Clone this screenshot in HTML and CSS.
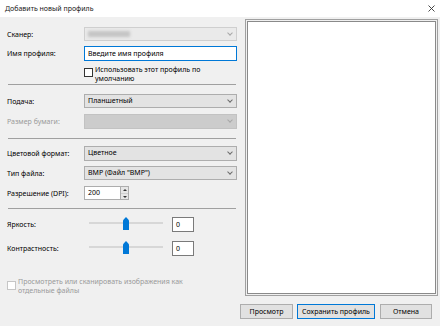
FILE: index.html
```html
<!DOCTYPE html>
<html lang="ru">
<head>
  <meta charset="UTF-8" />
  <title>Добавить новый профиль</title>
  <link rel="stylesheet" href="styles.css">
</head>
<body>
  <div class="dialog">
    <div class="titlebar">
      <span class="title">Добавить новый профиль</span>
      <svg class="close" viewBox="0 0 7 7" width="7" height="7">
        <path d="M0.5,0.5L6.5,6.5M6.5,0.5L0.5,6.5" stroke="#333" stroke-width="0.9" fill="none"/>
      </svg>
    </div>

    <div class="content">
      <div class="form">
        <div class="row r-scanner">
          <span class="label">Сканер:</span>
          <div class="combo combo-light">
            <span class="blurred"></span>
            <span class="chev"></span>
          </div>
        </div>
        <div class="row r-name">
          <span class="label">Имя профиля:</span>
          <div class="textbox focused">Введите имя профиля</div>
        </div>
        <div class="checkrow r-default">
          <span class="check"></span>
          <span class="checktext">Использовать этот профиль по<br>умолчанию</span>
        </div>
        <div class="sep s1"></div>

        <div class="row r-feed">
          <span class="label">Подача:</span>
          <div class="combo">Планшетный<span class="chev"></span></div>
        </div>
        <div class="row r-paper">
          <span class="label disabled">Размер бумаги:</span>
          <div class="combo combo-disabled"><span class="chev"></span></div>
        </div>
        <div class="sep s2"></div>

        <div class="row r-color">
          <span class="label">Цветовой формат:</span>
          <div class="combo">Цветное<span class="chev"></span></div>
        </div>
        <div class="row r-type">
          <span class="label">Тип файла:</span>
          <div class="combo">BMP (Файл "BMP")<span class="chev"></span></div>
        </div>
        <div class="row r-dpi">
          <span class="label">Разрешение (DPI):</span>
          <div class="spinner">
            <div class="spinbox">200</div>
            <div class="spinbtns">
              <span class="spin up"></span>
              <span class="spin down"></span>
            </div>
          </div>
        </div>
        <div class="sep s3"></div>

        <div class="row r-bright">
          <span class="label">Яркость:</span>
          <div class="slider"><span class="track"></span><span class="thumb"></span></div>
          <div class="numbox">0</div>
        </div>
        <div class="row r-contrast">
          <span class="label">Контрастность:</span>
          <div class="slider"><span class="track"></span><span class="thumb"></span></div>
          <div class="numbox">0</div>
        </div>

        <div class="checkrow r-separate">
          <span class="check check-disabled"></span>
          <span class="checktext disabled">Просмотреть или сканировать изображения как<br>отдельные файлы</span>
        </div>
      </div>

      <div class="preview">
        <div class="preview-inner"></div>
      </div>
    </div>

    <div class="footer">
      <button class="btn b-preview">Просмотр</button>
      <button class="btn b-save default">Сохранить профиль</button>
      <button class="btn b-cancel">Отмена</button>
    </div>
  </div>
</body>
</html>
```

FILE: styles.css
```css
body {
  margin: 0;
  background: #f0f0f0;
  font-family: 'Noto Sans', 'Open Sans', sans-serif;
  font-size: 7px;
  color: #000;
}
.dialog {
  width: 440px;
  height: 326px;
  display: flex;
  flex-direction: column;
  overflow: hidden;
}
.titlebar {
  height: 17px;
  background: #fff;
  display: flex;
  align-items: center;
  justify-content: space-between;
  padding: 0 5px 0 5px;
  flex-shrink: 0;
}
.title {
  font-size: 7px;
  color: #1a1a1a;
}
.content {
  display: flex;
  height: 281px;
}
.form {
  width: 237px;
  padding: 10px 0 0 7px;
  box-sizing: border-box;
  display: flex;
  flex-direction: column;
}
.row {
  display: flex;
  align-items: center;
  height: 14px;
}
.label {
  width: 77px;
  flex-shrink: 0;
  white-space: nowrap;
}
.disabled {
  color: #9a9a9a;
}
.combo {
  position: relative;
  width: 153px;
  height: 14px;
  box-sizing: border-box;
  border: 1px solid #adadad;
  background: #e3e3e3;
  padding-left: 3px;
  line-height: 12px;
}
.combo-light {
  background: #eaeaea;
  border-color: #cfcfcf;
}
.combo-disabled {
  background: #cccccc;
  border-color: #c2c2c2;
}
.chev {
  position: absolute;
  right: 4px;
  top: 3px;
  width: 3px;
  height: 3px;
  border-right: 1px solid #6d6d6d;
  border-bottom: 1px solid #6d6d6d;
  transform: rotate(45deg);
}
.combo-light .chev,
.combo-disabled .chev {
  border-color: #a8a8a8;
}
.blurred {
  display: block;
  margin-top: 3px;
  width: 42px;
  height: 6px;
  background: #c4c4c4;
  filter: blur(1.5px);
}
.textbox {
  width: 153px;
  height: 15px;
  box-sizing: border-box;
  border: 1px solid #adadad;
  background: #fff;
  padding-left: 3px;
  line-height: 13px;
}
.textbox.focused {
  border-color: #0078d7;
}
.r-name {
  margin-top: 5px;
  height: 15px;
}
.checkrow {
  display: flex;
  align-items: flex-start;
}
.r-default {
  margin: 4px 0 0 77px;
}
.check {
  width: 7px;
  height: 7px;
  border: 1px solid #333;
  background: #fff;
  margin: 3px 2px 0 0;
  flex-shrink: 0;
}
.check-disabled {
  border-color: #c6c6c6;
  margin: 4px 2px 0 0;
}
.checktext {
  line-height: 9px;
}
.sep {
  height: 1px;
  width: 228px;
  margin-left: 1px;
  background: #a0a0a0;
}
.s1 { margin-top: 1px; }
.r-feed { margin-top: 9px; }
.r-paper { margin-top: 6px; height: 15px; }
.r-paper .combo { height: 15px; }
.s2 { margin-top: 9px; }
.r-color { margin-top: 7px; height: 15px; }
.r-color .combo { height: 15px; }
.r-type { margin-top: 5px; }
.r-dpi { margin-top: 6px; height: 14px; }
.spinner {
  display: flex;
  height: 14px;
}
.spinbox {
  width: 36px;
  height: 14px;
  box-sizing: border-box;
  border: 1px solid #adadad;
  border-right: none;
  background: #fff;
  padding-left: 3px;
  line-height: 12px;
}
.spinbtns {
  width: 9px;
  height: 14px;
  box-sizing: border-box;
  border: 1px solid #adadad;
  display: flex;
  flex-direction: column;
}
.spin {
  flex: 1;
  background: #e6e6e6;
  position: relative;
}
.spin.up { border-bottom: 1px solid #cfcfcf; }
.spin::after {
  content: '';
  position: absolute;
  left: 2px;
  border-left: 2px solid transparent;
  border-right: 2px solid transparent;
}
.spin.up::after {
  top: 2px;
  border-bottom: 2px solid #333;
}
.spin.down::after {
  top: 2px;
  border-top: 2px solid #333;
}
.s3 { margin-top: 8px; }
.r-bright { margin-top: 8px; height: 15px; }
.r-contrast { margin-top: 9px; height: 15px; }
.slider {
  position: relative;
  width: 74px;
  height: 15px;
  margin-left: 5px;
}
.track {
  position: absolute;
  left: 0;
  right: 0;
  top: 5px;
  height: 2px;
  background: #d7d7d7;
}
.thumb {
  position: absolute;
  left: 34px;
  top: 0;
  width: 6px;
  height: 13px;
  background: #0078d7;
  clip-path: polygon(50% 0, 100% 25%, 100% 100%, 0 100%, 0 25%);
}
.numbox {
  width: 22px;
  height: 15px;
  box-sizing: border-box;
  border: 1px solid #7a7a7a;
  background: #fff;
  margin-left: 9px;
  padding-left: 3px;
  line-height: 13px;
}
.r-separate {
  margin-top: 21px;
  margin-left: 0;
}
.preview {
  margin: 2px 0 0 8px;
  width: 193px;
  height: 277px;
  box-sizing: border-box;
  border: 1px solid #a0a0a0;
  padding: 1px;
  display: flex;
}
.preview-inner {
  flex: 1;
  border: 1px solid #8a8a8a;
  background: #fff;
}
.footer {
  display: flex;
  justify-content: flex-end;
  gap: 4px;
  padding: 6px 8px 0 0;
}
.btn {
  height: 15px;
  box-sizing: border-box;
  border: 1px solid #adadad;
  background: #e1e1e1;
  font-family: inherit;
  font-size: 7px;
  padding: 0;
  line-height: 13px;
  color: #000;
  white-space: nowrap;
}
.b-preview { width: 53px; }
.b-save { width: 78px; }
.b-cancel { width: 52px; margin-left: 1px; }
.btn.default {
  border-color: #0078d7;
}
```
